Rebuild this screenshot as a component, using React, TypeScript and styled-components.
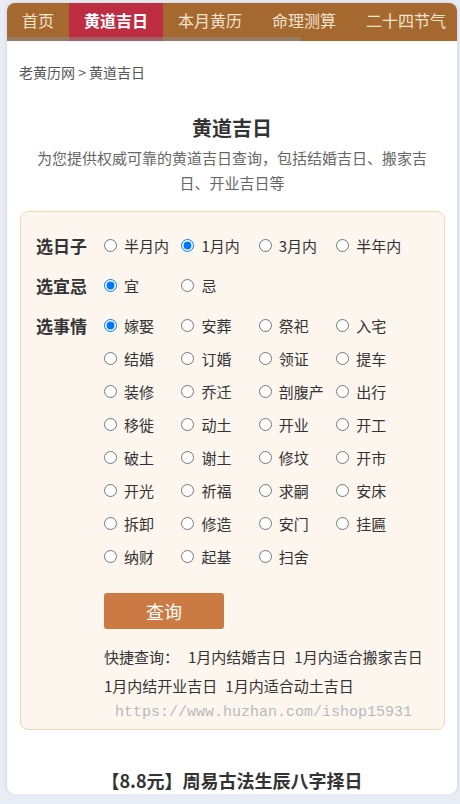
import React, { FC, useState } from 'react';
import styled, { createGlobalStyle } from 'styled-components';

const GlobalStyle = createGlobalStyle`
  html, body {
    margin: 0;
    padding: 0;
    background-color: #e8ecf4;
  }
  body {
    font-family: "Noto Sans CJK SC", "Noto Sans", sans-serif;
    color: #333;
  }
`;

const Page = styled.div`
  margin: 3px 3px 0 7px;
  background-color: #fff;
  border-radius: 8px;
  overflow: hidden;
  box-shadow: 0 0 4px rgba(0, 0, 0, 0.12);
`;

const Nav = styled.div`
  position: relative;
  display: flex;
  height: 38px;
  background-color: #a5682f;
  white-space: nowrap;
  overflow: hidden;
`;

const NavItem = styled.a<{ $active?: boolean }>`
  flex-shrink: 0;
  height: 38px;
  line-height: 35px;
  padding: 0 15px;
  font-size: 16px;
  font-weight: ${p => (p.$active ? 700 : 400)};
  color: ${p => (p.$active ? '#fff' : '#f3e4d0')};
  background-color: ${p => (p.$active ? '#be2d42' : 'transparent')};
  text-decoration: none;
  cursor: pointer;
`;

const ScrollThumb = styled.div`
  position: absolute;
  left: 0;
  bottom: 0;
  width: 294px;
  height: 4px;
  background-color: rgba(140, 140, 140, 0.55);
`;

const Breadcrumb = styled.div`
  padding: 21px 12px 0;
  font-size: 14px;
  line-height: 20px;
  color: #555;
`;

const Title = styled.h1`
  margin: 31px 0 0;
  font-size: 20px;
  line-height: 30px;
  font-weight: 700;
  text-align: center;
  color: #333;
`;

const Subtitle = styled.p`
  margin: 2px 0 0;
  padding: 0 20px;
  font-size: 15px;
  line-height: 25px;
  text-align: center;
  color: #666;
`;

const FormBox = styled.div`
  margin: 16px 12px 0 13px;
  padding: 17px 8px 4px 15px;
  background-color: #fcf6ef;
  border: 1px solid #f5d7b3;
  border-radius: 8px;
`;

const Sections = styled.div`
  display: flex;
  flex-direction: column;
  gap: 7px;
`;

const Row = styled.div`
  display: flex;
  align-items: flex-start;
`;

const RowLabel = styled.div`
  width: 68px;
  flex-shrink: 0;
  font-size: 17px;
  font-weight: 700;
  line-height: 33px;
  color: #333;
`;

const Options = styled.div`
  display: grid;
  grid-template-columns: repeat(4, 77.4px);
`;

const Option = styled.label`
  display: flex;
  align-items: center;
  height: 33px;
  font-size: 15px;
  color: #333;
  white-space: nowrap;
  cursor: pointer;

  input {
    width: 13px;
    height: 13px;
    margin: 0 7px 0 0;
    flex-shrink: 0;
  }
`;

const SubmitButton = styled.button`
  display: block;
  margin: 20px 0 0 68px;
  width: 120px;
  height: 36px;
  border: none;
  border-radius: 3px;
  background-color: #cc7a43;
  color: #fff;
  font-family: inherit;
  font-size: 18px;
  cursor: pointer;
`;

const Quick = styled.div`
  margin: 13px 0 0 68px;
  font-size: 15px;
  line-height: 29px;
  color: #333;
`;

const QuickLabel = styled.span`
  margin-right: 9px;
`;

const QuickLink = styled.a`
  display: inline-block;
  margin-right: 8px;
  color: #333;
  text-decoration: none;
`;

const Watermark = styled.div`
  margin-left: 79px;
  font-family: "Liberation Mono", "DejaVu Sans Mono", monospace;
  font-size: 15px;
  line-height: 25px;
  color: #b8b8b8;
  text-shadow: 0 0 1px #fff;
  white-space: nowrap;
`;

const Heading = styled.h2`
  margin: 36px 0 0;
  font-size: 18px;
  line-height: 28px;
  font-weight: 700;
  text-align: center;
  color: #333;
`;

const navItems = ['首页', '黄道吉日', '本月黄历', '命理测算', '二十四节气', '周公解梦', '星座运势'];
const ranges = ['半月内', '1月内', '3月内', '半年内'];
const kinds = ['宜', '忌'];
const events = [
  '嫁娶', '安葬', '祭祀', '入宅',
  '结婚', '订婚', '领证', '提车',
  '装修', '乔迁', '剖腹产', '出行',
  '移徙', '动土', '开业', '开工',
  '破土', '谢土', '修坟', '开市',
  '开光', '祈福', '求嗣', '安床',
  '拆卸', '修造', '安门', '挂匾',
  '纳财', '起基', '扫舍',
];
const quickLinks = ['1月内结婚吉日', '1月内适合搬家吉日', '1月内结开业吉日', '1月内适合动土吉日'];

const App: FC = () => {
  const [range, setRange] = useState('1月内');
  const [kind, setKind] = useState('宜');
  const [event, setEvent] = useState('嫁娶');

  return (
    <>
      <GlobalStyle />
      <Page>
        <Nav>
          {navItems.map(item => (
            <NavItem key={item} $active={item === '黄道吉日'}>{item}</NavItem>
          ))}
          <ScrollThumb />
        </Nav>
        <Breadcrumb>老黄历网 &gt; 黄道吉日</Breadcrumb>
        <Title>黄道吉日</Title>
        <Subtitle>为您提供权威可靠的黄道吉日查询，包括结婚吉日、搬家吉日、开业吉日等</Subtitle>
        <FormBox>
          <Sections>
            <Row>
              <RowLabel>选日子</RowLabel>
              <Options>
                {ranges.map(r => (
                  <Option key={r}>
                    <input type="radio" name="range" checked={range === r} onChange={() => setRange(r)} />
                    {r}
                  </Option>
                ))}
              </Options>
            </Row>
            <Row>
              <RowLabel>选宜忌</RowLabel>
              <Options>
                {kinds.map(k => (
                  <Option key={k}>
                    <input type="radio" name="kind" checked={kind === k} onChange={() => setKind(k)} />
                    {k}
                  </Option>
                ))}
              </Options>
            </Row>
            <Row>
              <RowLabel>选事情</RowLabel>
              <Options>
                {events.map(e => (
                  <Option key={e}>
                    <input type="radio" name="event" checked={event === e} onChange={() => setEvent(e)} />
                    {e}
                  </Option>
                ))}
              </Options>
            </Row>
          </Sections>
          <SubmitButton>查询</SubmitButton>
          <Quick>
            <QuickLabel>快捷查询：</QuickLabel>
            {quickLinks.map(q => (
              <QuickLink key={q}>{q}</QuickLink>
            ))}
          </Quick>
          <Watermark>https://www.huzhan.com/ishop15931</Watermark>
        </FormBox>
        <Heading>【8.8元】周易古法生辰八字择日</Heading>
      </Page>
    </>
  );
};

export default App;
